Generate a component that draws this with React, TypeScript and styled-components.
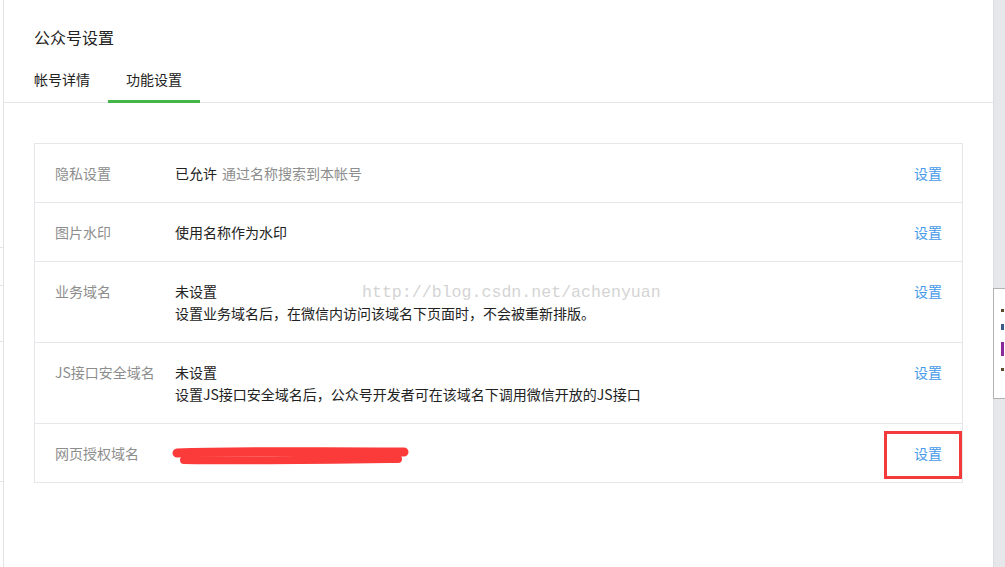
import React from "react";
import { createGlobalStyle, styled } from "styled-components";

type SettingRow = {
  label: string;
  value?: string;
  hint?: string;
  desc?: string;
  redacted?: boolean;
  highlighted?: boolean;
};

const rows: SettingRow[] = [
  { label: "隐私设置", value: "已允许", hint: "通过名称搜索到本帐号" },
  { label: "图片水印", value: "使用名称作为水印" },
  {
    label: "业务域名",
    value: "未设置",
    desc: "设置业务域名后，在微信内访问该域名下页面时，不会被重新排版。",
  },
  {
    label: "JS接口安全域名",
    value: "未设置",
    desc: "设置JS接口安全域名后，公众号开发者可在该域名下调用微信开放的JS接口",
  },
  { label: "网页授权域名", redacted: true, highlighted: true },
];

// heights of the stubs in the clipped side menu on the left
const sideStubs = [248, 38, 56, 140];

// bits of the popup that peeks in from the right edge
const peekMarks = [
  { color: "#5a4a2a", h: 3 },
  { color: "#3a5a8a", h: 6 },
  { color: "#8a2a9a", h: 14 },
  { color: "#5a4a2a", h: 3 },
];

const App = () => {
  return (
    <>
      <GlobalStyle />
      <StPage>
        <StLeftRail>
          {sideStubs.map((h, i) => (
            <StSideStub key={i} $h={h} />
          ))}
        </StLeftRail>

        <StMain>
          <StHeader>
            <StTitle>公众号设置</StTitle>
            <StTabs>
              <StTab>帐号详情</StTab>
              <StTab $active>功能设置</StTab>
            </StTabs>
          </StHeader>

          <StContent>
            <StTable>
              {rows.map((row) => (
                <StRow key={row.label} $highlighted={row.highlighted}>
                  <StLabel>{row.label}</StLabel>
                  <StValue>
                    {row.redacted ? (
                      <Scribble />
                    ) : (
                      <>
                        <div>
                          {row.value}
                          {row.hint && <StHint>{row.hint}</StHint>}
                        </div>
                        {row.desc && <div>{row.desc}</div>}
                      </>
                    )}
                  </StValue>
                  <StAction href="#">设置</StAction>
                </StRow>
              ))}
            </StTable>
          </StContent>
        </StMain>

        <StRightStrip>
          <StFloatBox>
            {peekMarks.map((m, i) => (
              <StPeekMark key={i} $color={m.color} $h={m.h} />
            ))}
          </StFloatBox>
        </StRightStrip>

        <StWatermark>http://blog.csdn.net/achenyuan</StWatermark>
      </StPage>
    </>
  );
};

const Scribble = () => (
  <StScribble width="240" height="22" viewBox="0 0 240 22">
    <path
      d="M5 11 C60 9 120 10 232 10"
      stroke="#fb3a3a"
      strokeWidth="9"
      strokeLinecap="round"
      fill="none"
    />
    <path
      d="M12 18 C80 19 150 18 226 17"
      stroke="#fb3a3a"
      strokeWidth="8"
      strokeLinecap="round"
      fill="none"
    />
  </StScribble>
);

const GlobalStyle = createGlobalStyle`
  html, body {
    margin: 0;
    padding: 0;
    background: #ffffff;
  }
  body {
    font-family: "Noto Sans CJK SC", "Noto Sans", sans-serif;
    color: #222222;
  }
  *, *::before, *::after {
    box-sizing: border-box;
  }
`;

const StPage = styled.div`
  display: flex;
  position: relative;
  width: 1005px;
  height: 567px;
  overflow: hidden;
  background: #ffffff;
`;

const StLeftRail = styled.div`
  display: flex;
  flex-direction: column;
  width: 3px;
  flex-shrink: 0;
`;

const StSideStub = styled.div<{ $h: number }>`
  height: ${(p) => p.$h}px;
  flex-shrink: 0;
  border-bottom: 1px solid #e4e4e4;
`;

const StMain = styled.div`
  flex: 1;
  display: flex;
  flex-direction: column;
  border-left: 1px solid #e4e4e4;
  background: #ffffff;
`;

const StHeader = styled.div`
  padding-top: 26px;
  border-bottom: 1px solid #e7e7eb;
`;

const StTitle = styled.h2`
  margin: 0;
  padding-left: 30px;
  font-size: 16px;
  font-weight: normal;
  line-height: 22px;
  color: #222222;
`;

const StTabs = styled.div`
  display: flex;
  margin-top: 20px;
  padding-left: 12px;
`;

const StTab = styled.div<{ $active?: boolean }>`
  padding: 0 18px 10px;
  margin-bottom: -1px;
  font-size: 14px;
  line-height: 22px;
  color: #222222;
  border-bottom: 3px solid ${(p) => (p.$active ? "#44b549" : "transparent")};
  cursor: pointer;
`;

const StContent = styled.div`
  padding: 40px 30px;
`;

const StTable = styled.div`
  border: 1px solid #e7e7eb;
`;

const StRow = styled.div<{ $highlighted?: boolean }>`
  position: relative;
  display: flex;
  padding: 18px 20px;
  font-size: 14px;
  line-height: 22px;

  & + & {
    border-top: 1px solid #e7e7eb;
  }

  ${(p) =>
    p.$highlighted &&
    `
    &::after {
      content: "";
      position: absolute;
      top: 7px;
      right: 0;
      width: 78px;
      height: 48px;
      border: 3px solid #f43b3b;
    }
  `}
`;

const StLabel = styled.div`
  width: 120px;
  flex-shrink: 0;
  color: #8d8d8d;
  white-space: nowrap;
`;

const StValue = styled.div`
  flex: 1;
  color: #222222;
`;

const StHint = styled.span`
  margin-left: 5px;
  color: #8d8d8d;
`;

const StAction = styled.a`
  flex-shrink: 0;
  color: #459ae9;
  text-decoration: none;
`;

const StScribble = styled.svg`
  display: block;
  margin-left: -3px;
  overflow: visible;
`;

const StRightStrip = styled.div`
  position: relative;
  width: 12px;
  flex-shrink: 0;
  background: #e6e7eb;
  border-left: 1px solid #dcdde0;
`;

const StFloatBox = styled.div`
  position: absolute;
  top: 288px;
  left: -1px;
  width: 60px;
  height: 111px;
  padding: 20px 0 0 7px;
  display: flex;
  flex-direction: column;
  align-items: flex-start;
  gap: 12px;
  background: #ffffff;
  border: 1px solid #b2b2b2;
`;

const StPeekMark = styled.span<{ $color: string; $h: number }>`
  display: block;
  width: 3px;
  height: ${(p) => p.$h}px;
  background: ${(p) => p.$color};
`;

const StWatermark = styled.div`
  position: absolute;
  left: 362px;
  top: 282px;
  font-family: "Liberation Mono", monospace;
  font-size: 16.6px;
  line-height: 22px;
  color: #d4d4d4;
  pointer-events: none;
  white-space: nowrap;
`;

export default App;
